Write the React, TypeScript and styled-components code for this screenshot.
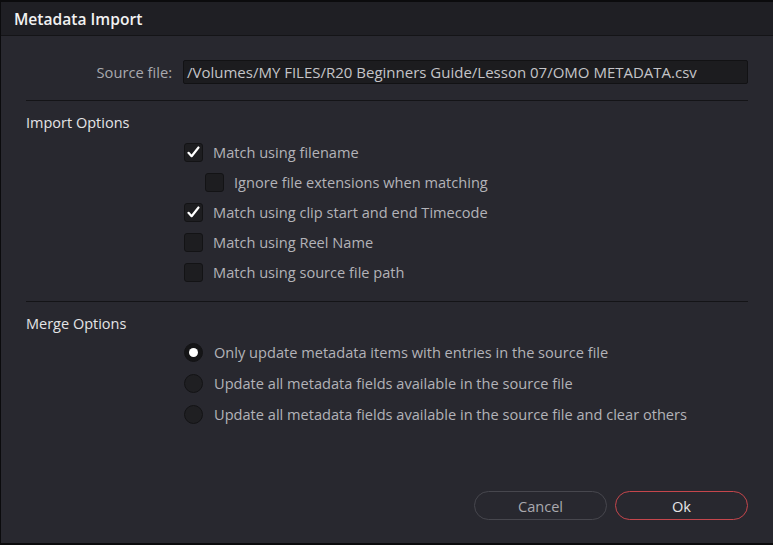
import React from "react";
import styled, { createGlobalStyle } from "styled-components";

const Global = createGlobalStyle`
  html, body { margin: 0; padding: 0; background: #0b0b0d; }
  body { font-family: "Open Sans", "Noto Sans", sans-serif; }
  * { box-sizing: border-box; }
`;

const Window = styled.div`
  width: 773px;
  height: 545px;
  background: #0b0b0d;
  padding: 2px 0 2px 1px;
  display: flex;
  flex-direction: column;
`;

const TitleBar = styled.div`
  height: 34px;
  flex: none;
  background: #1f1f24;
  border-bottom: 1px solid #141417;
  display: flex;
  align-items: center;
  padding-left: 13px;
  color: #f2f2f2;
  font-size: 15.6px;
  font-weight: 600;
`;

const Body = styled.div`
  flex: 1;
  background: #28282f;
  padding: 24px 25px 23px 25px;
  display: flex;
  flex-direction: column;
`;

const SourceRow = styled.div`
  display: flex;
  align-items: center;
  height: 24px;
  gap: 11px;
`;

const SourceLabel = styled.span`
  width: 146px;
  text-align: right;
  color: #a9a9ae;
  font-size: 14.7px;
`;

const PathBox = styled.div`
  flex: 1;
  height: 24px;
  background: #1c1c1f;
  border: 1px solid #121214;
  border-radius: 2px;
  color: #c4c4c8;
  font-size: 15px;
  display: flex;
  align-items: center;
  padding-left: 3px;
  white-space: nowrap;
`;

const Divider = styled.div<{ $top: number }>`
  height: 1px;
  background: #141417;
  margin-top: ${(p) => p.$top}px;
`;

const SectionTitle = styled.div`
  color: #e4e4e6;
  font-size: 14.5px;
  height: 20px;
  line-height: 20px;
  margin-top: 12px;
`;

const OptionList = styled.div<{ $gap: number; $top: number }>`
  display: flex;
  flex-direction: column;
  gap: ${(p) => p.$gap}px;
  margin-top: ${(p) => p.$top}px;
  padding-left: 158px;
`;

const Option = styled.div<{ $indent?: boolean; $labelGap: number }>`
  display: flex;
  align-items: center;
  height: 20px;
  gap: ${(p) => p.$labelGap}px;
  padding-left: ${(p) => (p.$indent ? 21 : 0)}px;
  color: #b3b3b8;
  font-size: 14.6px;
`;

const Box = styled.span`
  width: 19px;
  height: 19px;
  flex: none;
  background: #1d1d20;
  border: 1px solid #131315;
  border-radius: 3px;
  display: flex;
  align-items: center;
  justify-content: center;
`;

const Radio = styled.span<{ $on?: boolean }>`
  width: 19px;
  height: 19px;
  flex: none;
  border-radius: 50%;
  background: ${(p) => (p.$on ? "#151517" : "#1f1f22")};
  border: 1px solid #131315;
  display: flex;
  align-items: center;
  justify-content: center;
  &::after {
    content: "";
    display: ${(p) => (p.$on ? "block" : "none")};
    width: 9px;
    height: 9px;
    border-radius: 50%;
    background: #ffffff;
  }
`;

const Spacer = styled.div`
  flex: 1;
`;

const ButtonRow = styled.div`
  display: flex;
  justify-content: flex-end;
  gap: 8px;
`;

const Button = styled.button<{ $primary?: boolean }>`
  width: 133px;
  height: 29px;
  border-radius: 15px;
  background: #28282f;
  border: 1.5px solid ${(p) => (p.$primary ? "#c5464c" : "#47474e")};
  color: ${(p) => (p.$primary ? "#e6e6e8" : "#a9a9ae")};
  font-family: "Open Sans", "Noto Sans", sans-serif;
  font-size: 14.6px;
  padding: 0;
`;

const Check = () => (
  <svg width="13" height="12" viewBox="0 0 13 12">
    <path d="M1.5 6.8 L4.6 10.2 L11.5 1.5" fill="none" stroke="#ffffff" strokeWidth="2.2" strokeLinecap="round" strokeLinejoin="round" />
  </svg>
);

const importOptions = [
  { label: "Match using filename", checked: true },
  { label: "Ignore file extensions when matching", checked: false, indent: true },
  { label: "Match using clip start and end Timecode", checked: true },
  { label: "Match using Reel Name", checked: false },
  { label: "Match using source file path", checked: false },
];

const mergeOptions = [
  { label: "Only update metadata items with entries in the source file", on: true },
  { label: "Update all metadata fields available in the source file", on: false },
  { label: "Update all metadata fields available in the source file and clear others", on: false },
];

export default function App() {
  return (
    <>
      <Global />
      <Window>
        <TitleBar>Metadata Import</TitleBar>
        <Body>
          <SourceRow>
            <SourceLabel>Source file:</SourceLabel>
            <PathBox>/Volumes/MY FILES/R20 Beginners Guide/Lesson 07/OMO METADATA.csv</PathBox>
          </SourceRow>
          <Divider $top={16} />
          <SectionTitle>Import Options</SectionTitle>
          <OptionList $gap={10} $top={9}>
            {importOptions.map((o) => (
              <Option key={o.label} $indent={o.indent} $labelGap={10}>
                <Box>{o.checked && <Check />}</Box>
                {o.label}
              </Option>
            ))}
          </OptionList>
          <Divider $top={19} />
          <SectionTitle>Merge Options</SectionTitle>
          <OptionList $gap={11} $top={8}>
            {mergeOptions.map((o) => (
              <Option key={o.label} $labelGap={11}>
                <Radio $on={o.on} />
                {o.label}
              </Option>
            ))}
          </OptionList>
          <Spacer />
          <ButtonRow>
            <Button>Cancel</Button>
            <Button $primary>Ok</Button>
          </ButtonRow>
        </Body>
      </Window>
    </>
  );
}
